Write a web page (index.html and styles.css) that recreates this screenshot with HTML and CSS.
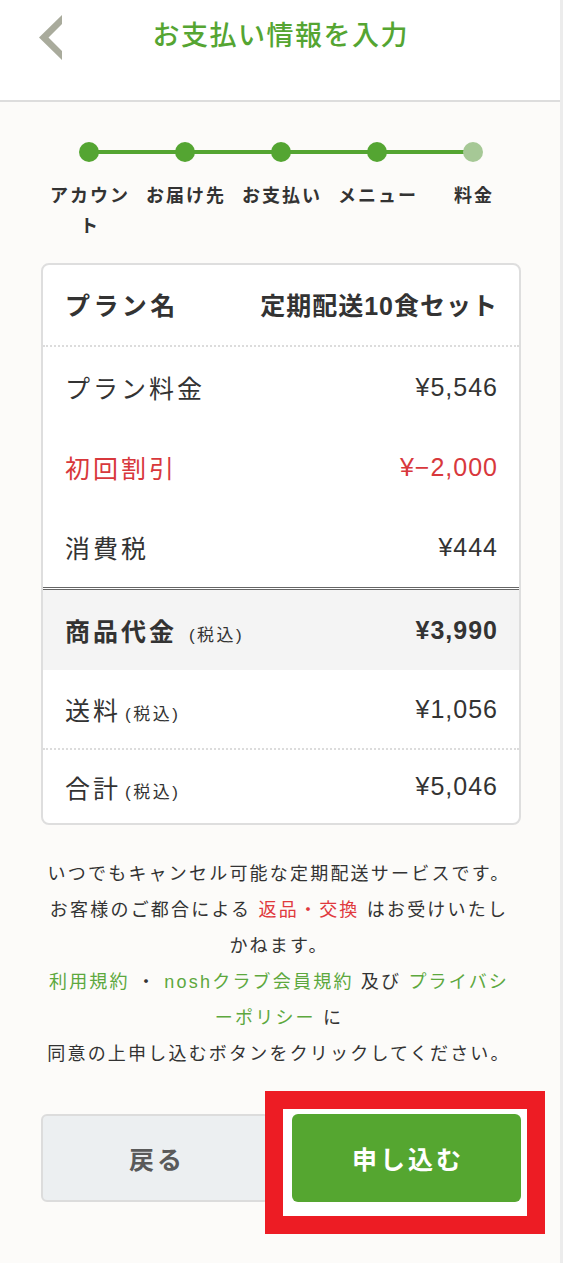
FILE: index.html
```html
<!DOCTYPE html>
<html lang="ja">
<head>
<meta charset="utf-8">
<title>お支払い情報を入力</title>
<link rel="stylesheet" href="styles.css">
</head>
<body>
<div class="app">
  <header class="header">
    <a class="back" href="#" aria-label="戻る">
      <svg width="26" height="46" viewBox="0 0 26 46"><polygon points="24,0 24,9 10.5,22.5 24,36 24,45 1,22.5" fill="#a9ab9c"/></svg>
    </a>
    <h1 class="title">お支払い情報を入力</h1>
    <span class="spacer"></span>
  </header>
  <main class="main">
    <div class="steps">
      <div class="track"></div>
      <div class="step"><span class="dot"></span><span class="step-label">アカウント</span></div>
      <div class="step"><span class="dot"></span><span class="step-label">お届け先</span></div>
      <div class="step"><span class="dot"></span><span class="step-label">お支払い</span></div>
      <div class="step"><span class="dot"></span><span class="step-label">メニュー</span></div>
      <div class="step"><span class="dot dot-current"></span><span class="step-label">料金</span></div>
    </div>

    <div class="card">
      <div class="row row-plan">
        <span class="label bold">プラン名</span>
        <span class="value bold">定期配送10食セット</span>
      </div>
      <div class="row">
        <span class="label">プラン料金</span>
        <span class="value">¥5,546</span>
      </div>
      <div class="row discount">
        <span class="label">初回割引</span>
        <span class="value">¥−2,000</span>
      </div>
      <div class="row row-tax">
        <span class="label">消費税</span>
        <span class="value">¥444</span>
      </div>
      <div class="row row-subtotal">
        <span class="label bold">商品代金 <small class="incl">(税込)</small></span>
        <span class="value bold">¥3,990</span>
      </div>
      <div class="row row-shipping">
        <span class="label">送料<small class="incl incl-tight">(税込)</small></span>
        <span class="value">¥1,056</span>
      </div>
      <div class="row row-total">
        <span class="label">合計<small class="incl incl-tight">(税込)</small></span>
        <span class="value">¥5,046</span>
      </div>
    </div>

    <p class="notice">いつでもキャンセル可能な定期配送サービスです。お客様のご都合による <a class="red" href="#">返品・交換</a> はお受けいたしかねます。<br><a class="green" href="#">利用規約</a> ・ <a class="green" href="#">noshクラブ会員規約</a> 及び <a class="green" href="#">プライバシーポリシー</a> に<br>同意の上申し込むボタンをクリックしてください。</p>

    <div class="actions">
      <button class="btn btn-back" type="button">戻る</button>
      <span class="highlight"></span>
      <button class="btn btn-submit" type="button">申し込む</button>
    </div>
  </main>
</div>
</body>
</html>
```
FILE: styles.css
```css
* { box-sizing: border-box; }
html, body { margin: 0; padding: 0; }
body {
  background: #fcfbf9;
  font-family: "Liberation Sans", "Noto Sans CJK JP", sans-serif;
  color: #333;
}
.app {
  width: 563px;
  min-height: 1263px;
  border-right: 3px solid #ececec;
}
.header {
  height: 102px;
  background: #fff;
  border-bottom: 2px solid #dddddd;
  display: grid;
  grid-template-columns: 1fr auto 1fr;
  align-items: start;
  padding-top: 15px;
}
.back {
  display: block;
  width: 26px;
  height: 46px;
  margin-left: 38px;
}
.back svg { display: block; }
.title {
  margin: 0;
  font-size: 27px;
  line-height: 42px;
  font-weight: 500;
  color: #55a532;
  letter-spacing: 1.5px;
  margin-right: -1.5px;
}
.main {
  padding: 40px 0 0 41px;
}
.steps {
  position: relative;
  width: 480px;
  display: grid;
  grid-template-columns: repeat(5, 96px);
}
.track {
  position: absolute;
  left: 48px;
  width: 384px;
  top: 8px;
  height: 4px;
  background: #54a532;
}
.step {
  display: flex;
  flex-direction: column;
  align-items: center;
}
.dot {
  position: relative;
  width: 20px;
  height: 20px;
  border-radius: 50%;
  background: #54a532;
}
.dot-current { background: #a6c896; }
.step-label {
  margin-top: 19px;
  font-size: 18px;
  line-height: 30px;
  font-weight: 700;
  letter-spacing: 2px;
  text-align: center;
  width: 96px;
  padding-left: 2px;
  color: #333;
}
.card {
  margin-top: 22px;
  width: 480px;
  background: #fff;
  border: 2px solid #dedede;
  border-radius: 8px;
  overflow: hidden;
}
.row {
  display: flex;
  justify-content: space-between;
  align-items: center;
  height: 80px;
  padding: 0 22px;
  font-size: 25px;
  color: #333;
}
.row .label { letter-spacing: 3px; }
.row .value { letter-spacing: 1px; margin-right: -1px; }
.bold { font-weight: 700; }
.row-plan {
  height: 82px;
  border-bottom: 2px dotted #dcdcdc;
  padding-bottom: 2px;
}
.row-plan .label { letter-spacing: 3.4px; }
.discount { color: #d8383c; }
.row-tax {
  height: 83px;
  border-bottom: 3px double #666;
}
.row-subtotal { background: #f4f4f4; }
.row-shipping {
  height: 80px;
  border-bottom: 2px dotted #dcdcdc;
}
.row-total { height: 73px; }
.incl {
  font-size: 17px;
  font-weight: 400;
  letter-spacing: 2.5px;
  margin-left: 2px;
}
.incl-tight { margin-left: 4px; }
.notice {
  margin: 31px 0 0 3px;
  width: 470px;
  font-size: 18px;
  line-height: 36px;
  letter-spacing: 2.2px;
  text-align: center;
  color: #333;
}
.notice a { text-decoration: none; }
.notice .red { color: #e0393d; }
.notice .green { color: #5ca83e; }
.actions {
  position: relative;
  margin-top: 42px;
  width: 480px;
  display: flex;
  gap: 22px;
}
.btn {
  flex: 0 0 229px;
  height: 88px;
  border-radius: 6px;
  font-family: inherit;
  font-size: 25px;
  font-weight: 700;
  letter-spacing: 3px;
  padding: 0 0 0 3px;
  cursor: pointer;
}
.btn-back {
  background: #eceff1;
  border: 2px solid #dcdcdc;
  color: #5a5a5a;
}
.btn-submit {
  position: relative;
  z-index: 2;
  background: #55a630;
  border: none;
  color: #fff;
}
.highlight {
  position: absolute;
  z-index: 1;
  left: 224px;
  top: -23px;
  width: 280px;
  height: 143px;
  border: 18px solid #ed1c24;
  background: #fff;
}
```
